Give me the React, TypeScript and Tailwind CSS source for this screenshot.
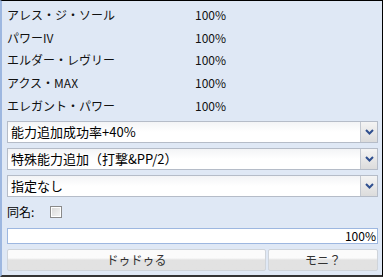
import React from 'react';

const rows = [
  { name: 'アレス・ジ・ソール', rate: '100%' },
  { name: 'パワーIV', rate: '100%' },
  { name: 'エルダー・レヴリー', rate: '100%' },
  { name: 'アクス・MAX', rate: '100%' },
  { name: 'エレガント・パワー', rate: '100%' },
];

const selects = ['能力追加成功率+40%', '特殊能力追加（打撃&PP/2）', '指定なし'];

function Chevron() {
  return (
    <svg width="9" height="6" viewBox="0 0 9 6">
      <path d="M1 1 L4.5 4.5 L8 1" stroke="#2f4f8f" strokeWidth="2" fill="none" />
    </svg>
  );
}

function Select({ label }: { label: string }) {
  return (
    <div className="flex h-[22px] border border-[#b5bcc8] bg-gradient-to-b from-[#f3f4f6] via-white to-white">
      <div className="flex-1 flex items-center pl-[3px] text-[13px] text-black">{label}</div>
      <div className="w-[17px] border-l border-[#c3c8d0] bg-gradient-to-b from-[#f4f4f4] to-[#dcdcdc] flex items-center justify-center">
        <Chevron />
      </div>
    </div>
  );
}

export default function App() {
  return (
    <div
      className="w-[383px] h-[277px] bg-[#dfe8f5] border-t border-r border-black border-b-2 border-b-[#333] border-l-2 border-l-[#9db7e0] overflow-hidden"
      style={{ fontFamily: '"Noto Sans CJK JP", "Noto Sans", sans-serif' }}
    >
      {/* Items */}
      <div className="pl-[5px] pt-[3px]">
        {rows.map((r) => (
          <div key={r.name} className="flex items-center h-[22.6px] text-[12px] text-[#111]">
            <span className="w-[188px]">{r.name}</span>
            <span>{r.rate}</span>
          </div>
        ))}
      </div>

      <div className="pl-[5px] pr-[4px] mt-[4px] flex flex-col gap-[5px]">
        {selects.map((s) => (
          <Select key={s} label={s} />
        ))}
      </div>

      <div className="flex items-center h-[26px] pl-[5px] mt-[2px] text-[12px]">
        <span className="w-[43px]">同名:</span>
        <span className="w-[12px] h-[12px] border border-[#8a8a8a] bg-gradient-to-br from-[#d8d8d8] to-[#f6f6f6] shadow-[inset_0_0_0_1px_#fff]" />
      </div>

      <div className="ml-[5px] mr-[4px] mt-[3px] h-[16px] border border-[#9db7e0] bg-white flex items-center justify-end pr-[1px] text-[12px] leading-none">
        100%
      </div>

      <div className="flex gap-[2px] ml-[5px] mr-[4px] mt-[5px]">
        <button className="w-[259px] h-[22px] rounded-[2px] border border-[#cfd4da] bg-gradient-to-b from-[#fbfbfb] from-40% to-[#e2e2e2] to-50% text-[12px] text-[#333]">
          ドゥドゥる
        </button>
        <button className="flex-1 h-[22px] rounded-[2px] border border-[#cfd4da] bg-gradient-to-b from-[#fbfbfb] from-40% to-[#e2e2e2] to-50% text-[12px] text-[#333]">
          モニ？
        </button>
      </div>
    </div>
  );
}
